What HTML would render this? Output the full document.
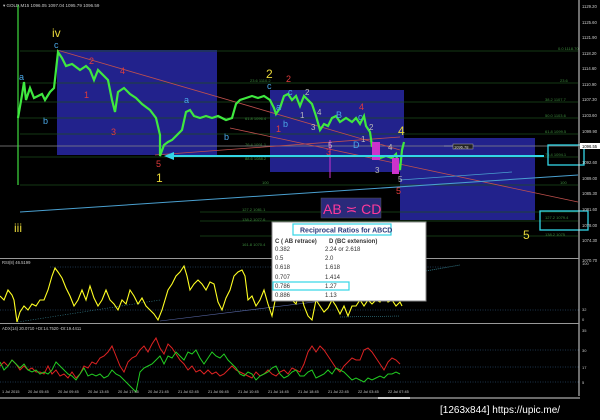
<!DOCTYPE html>
<html><head><meta charset="utf-8"><style>
html,body{margin:0;padding:0;background:#000;width:600px;height:420px;overflow:hidden;position:relative}
svg{display:block}
text{font-family:"Liberation Sans",sans-serif}
#cap{position:absolute;left:440px;top:404px;font:10px "Liberation Sans",sans-serif;color:#fff;white-space:nowrap;line-height:14px}
</style></head><body>
<svg width="600" height="420" viewBox="0 0 600 420" xmlns="http://www.w3.org/2000/svg">
<rect width="600" height="420" fill="#000"/>
<text x="3" y="7" font-size="4.5" fill="#ccc">▾ GOLD,M15  1096.05 1097.04 1095.79 1096.59</text>
<rect x="57" y="50" width="160" height="105" fill="#22228c"/>
<rect x="270" y="90" width="134" height="82" fill="#22228c"/>
<rect x="400" y="138" width="135" height="82" fill="#22228c"/>
<g stroke="#1d4d1d" stroke-width="0.8">
<line x1="20" y1="51" x2="578" y2="51"/>
<line x1="20" y1="83" x2="578" y2="83"/>
<line x1="20" y1="102" x2="578" y2="102"/>
<line x1="20" y1="118" x2="578" y2="118"/>
<line x1="20" y1="134" x2="578" y2="134"/>
<line x1="20" y1="157" x2="578" y2="157"/>
<line x1="20" y1="185" x2="578" y2="185"/>
<line x1="200" y1="212" x2="578" y2="212"/>
<line x1="200" y1="221" x2="578" y2="221"/>
<line x1="200" y1="236" x2="578" y2="236"/>
</g>
<g font-size="4" fill="#3c8a3c">
<text x="558" y="50">0.0  1118.70</text><text x="560" y="82">23.6</text>
<text x="545" y="101">38.2  1107.7</text><text x="545" y="117">50.0  1103.6</text>
<text x="545" y="133">61.8  1099.5</text><text x="545" y="156">76.4  1094.1</text>
<text x="560" y="184">100</text><text x="545" y="219">127.2  1079.4</text>
<text x="545" y="236">138.2  1075</text>
<text x="250" y="82">23.6  1110.2</text><text x="245" y="120">61.8  1096.4</text>
<text x="245" y="146">76.4  1091.1</text><text x="245" y="160">88.6  1088.2</text>
<text x="262" y="184">100</text><text x="242" y="211">127.2  1081.1</text>
<text x="242" y="221">138.2  1077.6</text><text x="242" y="246">161.8  1070.4</text>
</g>
<line x1="0" y1="146" x2="578" y2="146" stroke="#8a8a8a" stroke-width="0.8"/>
<line x1="57" y1="50" x2="400" y2="150" stroke="#c0504d" stroke-width="0.8"/>
<line x1="155" y1="155" x2="400" y2="137" stroke="#c0504d" stroke-width="0.8"/>
<line x1="230" y1="128" x2="578" y2="202" stroke="#c0504d" stroke-width="0.8"/>
<line x1="20" y1="212" x2="578" y2="175" stroke="#4aa0d0" stroke-width="1"/>
<line x1="400" y1="180" x2="512" y2="172" stroke="#4aa0d0" stroke-width="0.8"/>
<line x1="18" y1="5" x2="18" y2="185" stroke="#3fdc3f" stroke-width="1.2"/>
<polyline fill="none" stroke="#3fe83f" stroke-width="2.2" points="18,118 22,95 24,82 26,100 30,88 34,98 38,96 42,94 45,100 50,92 54,88 56,70 58,52 62,58 66,66 72,64 80,70 86,66 90,70 94,80 98,70 104,76 108,80 112,100 115,112 118,92 124,88 130,94 136,98 142,104 150,110 156,118 160,135 160,156 164,145 168,142 172,140 176,136 182,130 186,112 190,110 194,116 200,118 206,116 212,118 218,116 226,120 232,118 236,104 240,100 246,98 252,96 258,98 264,96 270,100 274,108 276,114 280,108 284,96 288,94 292,100 296,96 300,106 304,96 308,100 312,104 316,116 320,130 324,124 328,126 332,118 336,116 340,122 346,118 352,122 356,118 360,124 364,116 366,126 370,132 372,146 376,148 380,158 386,156 392,158 396,154 398,164 400,170 402,150 404,142"/>
<rect x="372" y="142" width="8" height="18" fill="#cc33cc"/>
<rect x="392" y="158" width="7" height="16" fill="#cc33cc"/>
<line x1="330" y1="140" x2="330" y2="178" stroke="#cc33cc" stroke-width="1"/>
<line x1="172" y1="156" x2="544" y2="156" stroke="#33d6e6" stroke-width="2"/>
<polygon points="164,156 174,152 174,160" fill="#33d6e6"/>
<rect x="548" y="145" width="36" height="20" fill="none" stroke="#33d6e6" stroke-width="1.3"/>
<rect x="540" y="211" width="48" height="19" fill="none" stroke="#33d6e6" stroke-width="1.3"/>
<rect x="453" y="144" width="20" height="5" fill="#222" stroke="#aaa" stroke-width="0.5"/>
<text x="454" y="148.3" font-size="4" fill="#ddd">1096.78</text>
<line x1="444" y1="146" x2="453" y2="146" stroke="#aaa" stroke-width="0.6"/>
<g font-size="12" fill="#e8d83a"><text x="52" y="37">iv</text><text x="14" y="232">iii</text><text x="156" y="182">1</text><text x="266" y="78">2</text><text x="398" y="135">4</text><text x="523" y="239">5</text></g>
<g font-size="9" fill="#4aa8e8"><text x="54" y="48">c</text><text x="19" y="80">a</text><text x="43" y="124">b</text><text x="184" y="103">a</text><text x="224" y="140">b</text><text x="267" y="89">c</text><text x="276" y="110">a</text><text x="283" y="127">b</text><text x="288" y="95">c</text><text x="336" y="118">B</text><text x="358" y="120">c</text><text x="353" y="148">D</text></g>
<g font-size="9" fill="#e03c3c"><text x="89" y="64">2</text><text x="120" y="74">4</text><text x="84" y="98">1</text><text x="111" y="135">3</text><text x="156" y="167">5</text><text x="286" y="82">2</text><text x="276" y="132">1</text><text x="359" y="110">4</text><text x="326" y="155">3</text><text x="396" y="194">5</text></g>
<g font-size="8" fill="#bbb"><text x="305" y="95">2</text><text x="300" y="118">1</text><text x="317" y="115">4</text><text x="311" y="130">3</text><text x="369" y="130">2</text><text x="361" y="142">1</text><text x="388" y="150">4</text><text x="375" y="173">3</text><text x="328" y="148">5</text><text x="398" y="182">5</text></g>
<rect x="321" y="198" width="60" height="20" fill="#2a2a7a" stroke="#555" stroke-width="0.5"/>
<text x="323" y="214" font-size="14" fill="#ff3a9a">AB ≍ CD</text>
<line x1="579" y1="0" x2="579" y2="396" stroke="#ddd" stroke-width="1"/>
<g font-size="4.2" fill="#ccc">
<text x="582" y="8">1129.20</text><text x="582" y="24">1125.60</text><text x="582" y="39">1121.90</text><text x="582" y="55">1118.20</text><text x="582" y="70">1114.60</text><text x="582" y="86">1110.90</text><text x="582" y="101">1107.30</text><text x="582" y="117">1103.60</text><text x="582" y="133">1099.90</text><text x="582" y="164">1092.60</text><text x="582" y="180">1089.00</text><text x="582" y="195">1085.30</text><text x="582" y="211">1081.60</text><text x="582" y="227">1078.00</text><text x="582" y="242">1074.30</text><text x="582" y="262">1070.70</text>
</g>
<rect x="580" y="143" width="20" height="6" fill="#fff"/><text x="582" y="148" font-size="4.2" fill="#000">1096.55</text>
<line x1="0" y1="258.5" x2="579" y2="258.5" stroke="#999" stroke-width="1"/>
<line x1="0" y1="323.5" x2="579" y2="323.5" stroke="#999" stroke-width="1"/>
<text x="2" y="264" font-size="4.2" fill="#ccc">RSI(8) 46.5199</text>
<line x1="50" y1="267" x2="450" y2="267" stroke="#3a6a9a" stroke-dasharray="1,1.5" stroke-width="0.6"/>
<line x1="0" y1="310" x2="579" y2="310" stroke="#3a6a9a" stroke-dasharray="1,1.5" stroke-width="0.6"/>
<line x1="18" y1="322" x2="160" y2="300" stroke="#3a8a9a" stroke-dasharray="1,1.5" stroke-width="0.6"/>
<line x1="160" y1="321" x2="330" y2="300" stroke="#5a6aaa" stroke-width="0.6"/>
<polyline fill="none" stroke="#ffff22" stroke-width="1.1" points="0,296 4,300 8,290 12,295 14,300 17,322 20,312 24,306 28,310 32,304 36,306 40,300 44,300 48,290 52,276 55,268 58,272 62,278 66,288 70,296 74,306 78,300 82,290 86,300 90,286 94,298 98,306 102,300 106,290 110,300 114,304 118,310 122,300 126,304 130,290 134,296 138,304 142,298 146,306 150,310 154,314 158,320 162,310 165,300 168,290 172,284 176,276 180,272 184,266 187,276 190,290 194,284 198,280 202,284 206,290 210,282 214,284 218,302 222,310 226,298 230,290 234,276 238,272 242,270 245,276 248,300 252,296 256,306 260,300 264,290 268,304 272,316 276,296 280,300 284,288 288,300 292,300 296,304 300,290 304,306 308,316 312,320 316,300 320,306 324,312 328,308 332,300 336,306 340,314 344,306 348,316 352,306 356,306 360,300 364,306 368,300 372,304 376,300 380,302 384,296 388,302 392,300 396,306 400,302 402,306"/>
<line x1="420" y1="272" x2="460" y2="265" stroke="#3a8a9a" stroke-dasharray="1,1" stroke-width="0.8"/>
<line x1="340" y1="317" x2="400" y2="316" stroke="#3a8a9a" stroke-dasharray="1,1" stroke-width="0.6"/>
<g font-size="4" fill="#ccc"><text x="582" y="265">100</text><text x="582" y="311">32</text><text x="582" y="321">0</text></g>
<text x="2" y="330" font-size="4.2" fill="#ccc">ADX(14) 20.0710 +DI:14.7520 -DI:19.4411</text>
<line x1="0" y1="350" x2="579" y2="350" stroke="#3a6a9a" stroke-dasharray="1,1.5" stroke-width="0.6"/>
<line x1="0" y1="382" x2="579" y2="382" stroke="#3a6a9a" stroke-dasharray="1,1.5" stroke-width="0.6"/>
<line x1="0" y1="367" x2="579" y2="367" stroke="#3a6a9a" stroke-dasharray="1,1.5" stroke-width="0.6"/>
<polyline fill="none" stroke="#dd2222" stroke-width="1" points="0,366 4,362 8,366 12,360 16,364 20,370 24,366 28,370 32,368 36,372 40,372 44,374 48,366 52,374 56,370 60,376 64,374 68,378 72,372 76,378 80,374 84,366 88,368 92,362 96,364 100,358 104,356 108,352 112,346 116,356 120,366 124,372 128,362 132,358 136,356 140,350 144,346 148,352 152,344 156,338 160,348 164,354 168,344 172,348 176,354 180,360 184,364 188,370 192,366 196,372 200,370 204,374 208,370 212,374 216,372 220,376 224,374 228,370 232,366 236,370 240,372 244,374 248,376 252,378 256,372 260,376 264,374 268,370 272,374 276,376 280,372 284,370 288,374 292,368 296,370 300,372 304,364 308,352 312,346 316,352 320,346 324,350 328,356 332,362 336,368 340,372 344,366 348,362 352,358 356,360 360,360 364,350 368,348 372,352 376,358 380,364 384,370 388,362 392,358 396,360 400,364"/>
<polyline fill="none" stroke="#22cc22" stroke-width="1" points="0,362 4,370 8,366 12,360 16,364 20,368 24,364 28,370 32,372 36,370 40,374 44,372 48,374 52,370 56,362 60,366 64,370 68,374 72,376 76,380 80,374 84,368 88,376 92,374 96,376 100,374 104,378 108,376 112,370 116,374 120,376 124,380 128,384 132,388 136,392 140,372 144,368 148,366 152,364 156,360 160,356 164,364 168,356 172,358 176,352 180,356 184,360 188,352 192,354 196,350 200,358 204,364 208,358 212,352 216,356 220,358 224,354 228,360 232,364 236,368 240,374 244,376 248,372 252,374 256,380 260,376 264,374 268,372 272,368 276,366 280,374 284,378 288,376 292,372 296,370 300,376 304,376 308,372 312,370 316,378 320,376 324,374 328,370 332,374 336,368 340,370 344,372 348,376 352,380 356,378 360,380 364,382 368,378 372,380 376,378 380,376 384,378 388,374 392,374 396,372 400,374"/>
<g font-size="4" fill="#ccc"><text x="582" y="332">35</text><text x="582" y="352">30</text><text x="582" y="369">17</text><text x="582" y="384">5</text></g>
<g font-size="3.8" fill="#ccc">
<text x="2" y="393">1 Jul 2015</text><text x="28" y="393">20 Jul 05:45</text><text x="58" y="393">20 Jul 09:45</text><text x="88" y="393">20 Jul 13:45</text><text x="118" y="393">20 Jul 17:45</text><text x="148" y="393">20 Jul 21:45</text><text x="178" y="393">21 Jul 02:45</text><text x="208" y="393">21 Jul 06:45</text><text x="238" y="393">21 Jul 10:45</text><text x="268" y="393">21 Jul 14:45</text><text x="298" y="393">21 Jul 18:45</text><text x="328" y="393">21 Jul 22:45</text><text x="358" y="393">22 Jul 03:45</text><text x="388" y="393">22 Jul 07:45</text>
</g>
<line x1="0" y1="398" x2="580" y2="398" stroke="#aaa" stroke-width="1.2"/>
<line x1="378" y1="398" x2="410" y2="398" stroke="#fff" stroke-width="1.5"/>
<rect x="272" y="222" width="154" height="79" fill="#fff" stroke="#888" stroke-width="1"/>
<rect x="293" y="224" width="98" height="11" fill="none" stroke="#33d6e6" stroke-width="1.2"/>
<text x="300" y="232.5" font-size="7" font-weight="bold" fill="#2a3a7a">Reciprocal Ratios for ABCD</text>
<g font-size="6" fill="#333">
<text x="275" y="243" font-weight="bold">C ( AB retrace)</text><text x="329" y="243" font-weight="bold">D (BC extension)</text>
<text x="275" y="251">0.382</text><text x="325" y="251">2.24 or 2.618</text>
<text x="275" y="260">0.5</text><text x="325" y="260">2.0</text>
<text x="275" y="269">0.618</text><text x="325" y="269">1.618</text>
<text x="275" y="279">0.707</text><text x="325" y="279">1.414</text>
<text x="275" y="288">0.786</text><text x="325" y="288">1.27</text>
<text x="275" y="297">0.886</text><text x="325" y="297">1.13</text>
</g>
<rect x="273" y="282" width="76" height="8" fill="none" stroke="#33d6e6" stroke-width="1.2"/>
</svg>
<div id="cap">[1263x844] https://upic.me/</div>
</body></html>
